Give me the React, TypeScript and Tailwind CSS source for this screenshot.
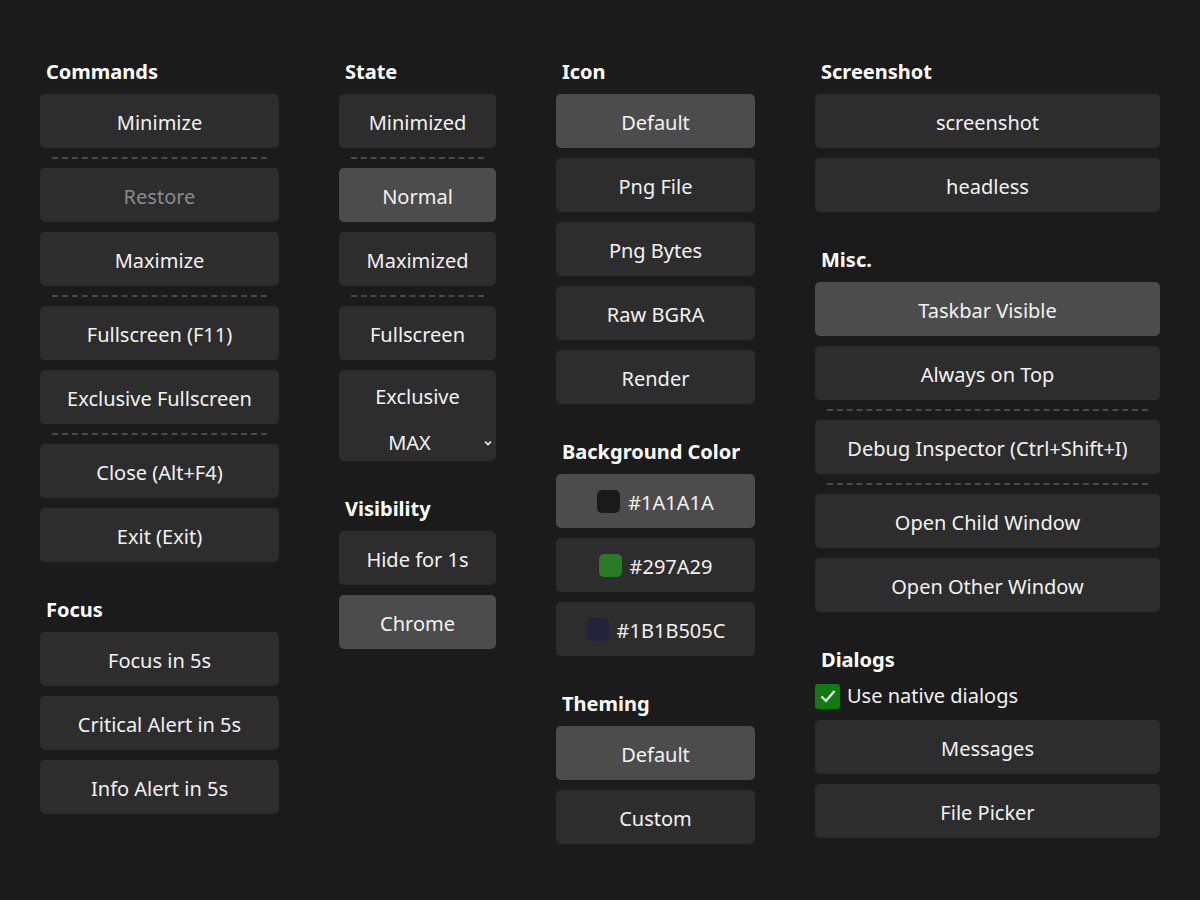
import React from "react";

type Item =
  | { kind: "btn"; label: string; active?: boolean; disabled?: boolean; swatch?: string }
  | { kind: "sep" };

const Btn = ({
  label,
  active,
  disabled,
  swatch,
}: {
  label: string;
  active?: boolean;
  disabled?: boolean;
  swatch?: string;
}) => (
  <div
    className={`h-[54px] pt-[4px] rounded-[5px] flex items-center justify-center gap-[8px] text-[20px] ${
      active ? "bg-[#4c4c4c]" : "bg-[#2d2d2d]"
    } ${disabled ? "text-[#8b8b8b]" : "text-[#f2f2f2]"}`}
  >
    {swatch && <span className="w-[23px] h-[23px] -mt-[4px] rounded-[5px]" style={{ background: swatch }} />}
    <span>{label}</span>
  </div>
);

const Sep = () => (
  <div className="h-0 -my-[1px] border-t-2 border-dashed border-[#4a4a4a] mx-[12px]" />
);

const Heading = ({ children, top = false }: { children: React.ReactNode; top?: boolean }) => (
  <div className={`h-[28px] leading-[28px] pl-[6px] mb-[8px] text-[20px] font-bold text-white ${top ? "" : "mt-[34px]"}`}>
    {children}
  </div>
);

const Stack = ({ children }: { children: React.ReactNode }) => (
  <div className="flex flex-col gap-[10px]">{children}</div>
);

const render = (items: Item[]) =>
  items.map((it, i) =>
    it.kind === "sep" ? <Sep key={i} /> : <Btn key={i} {...it} />
  );

export default function App() {
  return (
    <div
      className="min-h-[900px] w-[1200px] bg-[#1b1b1b] pt-[58px] pl-[40px] flex gap-[60px]"
      style={{ fontFamily: '"Noto Sans", "Open Sans", sans-serif' }}
    >
      {/* Commands / Focus */}
      <div className="w-[239px]">
        <Heading top>Commands</Heading>
        <Stack>
          {render([
            { kind: "btn", label: "Minimize" },
            { kind: "sep" },
            { kind: "btn", label: "Restore", disabled: true },
            { kind: "btn", label: "Maximize" },
            { kind: "sep" },
            { kind: "btn", label: "Fullscreen (F11)" },
            { kind: "btn", label: "Exclusive Fullscreen" },
            { kind: "sep" },
            { kind: "btn", label: "Close (Alt+F4)" },
            { kind: "btn", label: "Exit (Exit)" },
          ])}
        </Stack>
        <Heading>Focus</Heading>
        <Stack>
          <Btn label="Focus in 5s" />
          <Btn label="Critical Alert in 5s" />
          <Btn label="Info Alert in 5s" />
        </Stack>
      </div>

      {/* State / Visibility */}
      <div className="w-[157px]">
        <Heading top>State</Heading>
        <Stack>
          <Btn label="Minimized" />
          <Sep />
          <Btn label="Normal" active />
          <Btn label="Maximized" />
          <Sep />
          <Btn label="Fullscreen" />
          <div className="h-[91px] rounded-[5px] bg-[#2d2d2d] text-[#f2f2f2] text-[20px] flex flex-col items-center pt-[13px]">
            <span className="leading-[28px]">Exclusive</span>
            <div className="relative w-full flex justify-center mt-[18px] leading-[28px]">
              <span className="mr-[16px]">MAX</span>
              <svg
                className="absolute right-[3px] top-[10px]"
                width="10"
                height="8"
                viewBox="0 0 10 8"
                fill="none"
                stroke="#f2f2f2"
                strokeWidth="1.6"
              >
                <path d="M2 2.5 L5 5.5 L8 2.5" />
              </svg>
            </div>
          </div>
        </Stack>
        <Heading>Visibility</Heading>
        <Stack>
          <Btn label="Hide for 1s" />
          <Btn label="Chrome" active />
        </Stack>
      </div>

      {/* Icon / Background / Theming */}
      <div className="w-[199px]">
        <Heading top>Icon</Heading>
        <Stack>
          <Btn label="Default" active />
          <Btn label="Png File" />
          <Btn label="Png Bytes" />
          <Btn label="Raw BGRA" />
          <Btn label="Render" />
        </Stack>
        <Heading>Background Color</Heading>
        <Stack>
          <Btn label="#1A1A1A" active swatch="#1a1a1a" />
          <Btn label="#297A29" swatch="#297a29" />
          <Btn label="#1B1B505C" swatch="#23233a" />
        </Stack>
        <Heading>Theming</Heading>
        <Stack>
          <Btn label="Default" active />
          <Btn label="Custom" />
        </Stack>
      </div>

      {/* Screenshot / Misc / Dialogs */}
      <div className="w-[345px]">
        <Heading top>Screenshot</Heading>
        <Stack>
          <Btn label="screenshot" />
          <Btn label="headless" />
        </Stack>
        <Heading>Misc.</Heading>
        <Stack>
          <Btn label="Taskbar Visible" active />
          <Btn label="Always on Top" />
          <Sep />
          <Btn label="Debug Inspector (Ctrl+Shift+I)" />
          <Sep />
          <Btn label="Open Child Window" />
          <Btn label="Open Other Window" />
        </Stack>
        <Heading>Dialogs</Heading>
        <Stack>
          <div className="h-[28px] flex items-center gap-[7px] text-[20px] text-[#f2f2f2]">
            <span className="w-[25px] h-[25px] rounded-[3px] bg-[#107c10] flex items-center justify-center">
              <svg width="18" height="18" viewBox="0 0 18 18" fill="none" stroke="#fff" strokeWidth="2.2">
                <path d="M2.5 9.5 L7 14 L15.5 4" />
              </svg>
            </span>
            <span>Use native dialogs</span>
          </div>
          <Btn label="Messages" />
          <Btn label="File Picker" />
        </Stack>
      </div>
    </div>
  );
}
